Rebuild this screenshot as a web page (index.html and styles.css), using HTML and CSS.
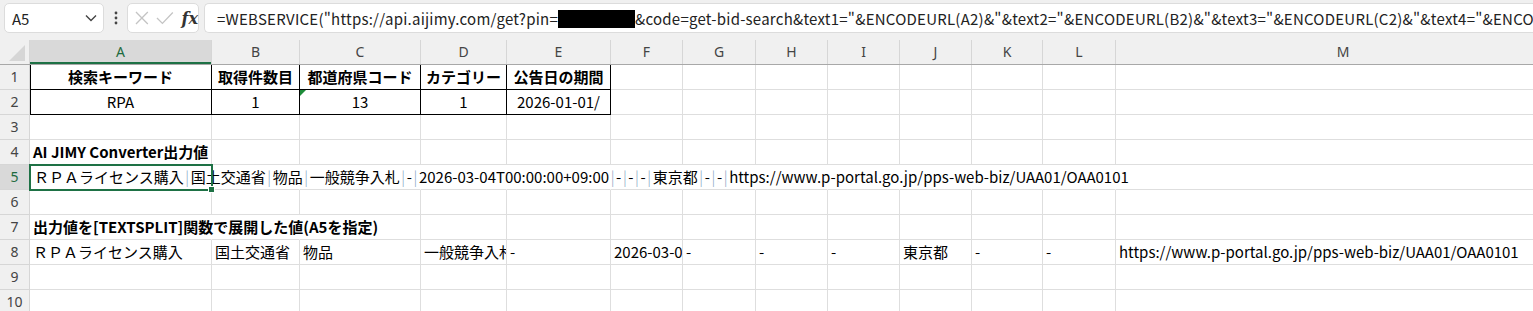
FILE: index.html
```html
<!DOCTYPE html>
<html lang="ja">
<head>
<meta charset="utf-8">
<title>Excel</title>
<link rel="stylesheet" href="styles.css">
</head>
<body>
<div class="toolbar">
  <div class="namebox">
    <span class="nb-text">A5</span>
    <svg class="chev" width="12" height="8" viewBox="0 0 12 8"><path d="M1 1.5 L6 6.5 L11 1.5" fill="none" stroke="#444" stroke-width="1.4"/></svg>
  </div>
  <div class="dots"><svg width="4" height="14" viewBox="0 0 4 14"><circle cx="2" cy="2" r="1.4" fill="#444"/><circle cx="2" cy="7" r="1.4" fill="#444"/><circle cx="2" cy="12" r="1.4" fill="#444"/></svg></div>
  <div class="fxbox">
    <svg width="16" height="16" viewBox="0 0 16 16"><path d="M2 2 L14 14 M14 2 L2 14" stroke="#c4c4c4" stroke-width="1.3" fill="none"/></svg>
    <svg width="18" height="14" viewBox="0 0 18 14"><path d="M1 7 L6.5 12.5 L17 1.5" stroke="#c4c4c4" stroke-width="1.3" fill="none"/></svg>
    <span class="fx">fx</span>
  </div>
  <div class="formula"><span class="ftext">=WEBSERVICE("https://api.aijimy.com/get?pin=<span class="redact"></span>&amp;code=get-bid-search&amp;text1="&amp;ENCODEURL(A2)&amp;"&amp;text2="&amp;ENCODEURL(B2)&amp;"&amp;text3="&amp;ENCODEURL(C2)&amp;"&amp;text4="&amp;ENCODEURL(D2)&amp;"&amp;text5="&amp;ENCODEURL(E2))</span></div>
</div>

<div class="sheet">
  <div class="row hdr">
    <div class="corner"><svg width="16" height="16" viewBox="0 0 16 16"><path d="M16 0 L16 16 L0 16 Z" fill="#d6d6d6"/></svg></div>
    <div class="ch sel">A</div><div class="ch">B</div><div class="ch">C</div><div class="ch">D</div><div class="ch">E</div><div class="ch">F</div><div class="ch">G</div><div class="ch">H</div><div class="ch">I</div><div class="ch">J</div><div class="ch">K</div><div class="ch">L</div><div class="ch">M</div>
  </div>

  <div class="row">
    <div class="rh">1</div>
    <div class="c ctr b tb tl">検索キーワード</div>
    <div class="c ctr b tb">取得件数目</div>
    <div class="c ctr b tb">都道府県コード</div>
    <div class="c ctr b tb">カテゴリー</div>
    <div class="c ctr b tb">公告日の期間</div>
    <div class="c"></div><div class="c"></div><div class="c"></div><div class="c"></div><div class="c"></div><div class="c"></div><div class="c"></div><div class="c"></div>
  </div>

  <div class="row">
    <div class="rh">2</div>
    <div class="c ctr tb tl">RPA</div>
    <div class="c ctr tb">1</div>
    <div class="c ctr tb flag">13</div>
    <div class="c ctr tb">1</div>
    <div class="c ctr tb">2026-01-01/</div>
    <div class="c"></div><div class="c"></div><div class="c"></div><div class="c"></div><div class="c"></div><div class="c"></div><div class="c"></div><div class="c"></div>
  </div>

  <div class="row">
    <div class="rh">3</div>
    <div class="c"></div><div class="c"></div><div class="c"></div><div class="c"></div><div class="c"></div><div class="c"></div><div class="c"></div><div class="c"></div><div class="c"></div><div class="c"></div><div class="c"></div><div class="c"></div><div class="c"></div>
  </div>

  <div class="row">
    <div class="rh">4</div>
    <div class="c b ov">AI JIMY Converter出力値</div>
    <div class="c"></div><div class="c"></div><div class="c"></div><div class="c"></div><div class="c"></div><div class="c"></div><div class="c"></div><div class="c"></div><div class="c"></div><div class="c"></div><div class="c"></div><div class="c"></div>
  </div>

  <div class="row">
    <div class="rh rsel">5</div>
    <div class="c ov nr active">ＲＰＡライセンス購入<span class="sep">|</span>国土交通省<span class="sep">|</span>物品<span class="sep">|</span>一般競争入札<span class="sep">|</span>-<span class="sep">|</span>2026-03-04T00:00:00+09:00<span class="sep">|</span>-<span class="sep">|</span>-<span class="sep">|</span>-<span class="sep">|</span>東京都<span class="sep">|</span>-<span class="sep">|</span>-<span class="sep">|</span>https://www.p-portal.go.jp/pps-web-biz/UAA01/OAA0101</div>
    <div class="c nr"></div><div class="c nr"></div><div class="c nr"></div><div class="c nr"></div><div class="c nr"></div><div class="c nr"></div><div class="c nr"></div><div class="c nr"></div><div class="c nr"></div><div class="c nr"></div><div class="c nr"></div><div class="c"></div>
  </div>

  <div class="row">
    <div class="rh">6</div>
    <div class="c"></div><div class="c"></div><div class="c"></div><div class="c"></div><div class="c"></div><div class="c"></div><div class="c"></div><div class="c"></div><div class="c"></div><div class="c"></div><div class="c"></div><div class="c"></div><div class="c"></div>
  </div>

  <div class="row">
    <div class="rh">7</div>
    <div class="c b ov nr">出力値を[TEXTSPLIT]関数で展開した値(A5を指定)</div>
    <div class="c nr"></div><div class="c"></div><div class="c"></div><div class="c"></div><div class="c"></div><div class="c"></div><div class="c"></div><div class="c"></div><div class="c"></div><div class="c"></div><div class="c"></div><div class="c"></div>
  </div>

  <div class="row">
    <div class="rh">8</div>
    <div class="c">ＲＰＡライセンス購入</div>
    <div class="c">国土交通省</div>
    <div class="c">物品</div>
    <div class="c">一般競争入札</div>
    <div class="c">-</div>
    <div class="c">2026-03-04T00:00:00+09:00</div>
    <div class="c">-</div>
    <div class="c">-</div>
    <div class="c">-</div>
    <div class="c">東京都</div>
    <div class="c">-</div>
    <div class="c">-</div>
    <div class="c">https://www.p-portal.go.jp/pps-web-biz/UAA01/OAA0101</div>
  </div>

  <div class="row">
    <div class="rh">9</div>
    <div class="c"></div><div class="c"></div><div class="c"></div><div class="c"></div><div class="c"></div><div class="c"></div><div class="c"></div><div class="c"></div><div class="c"></div><div class="c"></div><div class="c"></div><div class="c"></div><div class="c"></div>
  </div>

  <div class="row">
    <div class="rh">10</div>
    <div class="c"></div><div class="c"></div><div class="c"></div><div class="c"></div><div class="c"></div><div class="c"></div><div class="c"></div><div class="c"></div><div class="c"></div><div class="c"></div><div class="c"></div><div class="c"></div><div class="c"></div>
  </div>
</div>
</body>
</html>
```

FILE: styles.css
```css
html, body {
  margin: 0;
  padding: 0;
  background: #ffffff;
  overflow: hidden;
  width: 1533px;
  height: 311px;
}
body {
  font-family: "Noto Sans CJK JP", "Noto Sans", sans-serif;
  color: #000;
}

.toolbar {
  display: flex;
  align-items: stretch;
  height: 30px;
  padding: 3px 0 7px 4px;
  background: #f0f0f0;
  box-sizing: content-box;
}
.namebox {
  width: 100px;
  box-sizing: border-box;
  background: #fff;
  border: 1px solid #dcdcdc;
  border-radius: 5px;
  display: flex;
  align-items: center;
  justify-content: space-between;
  padding: 0 6px 0 7px;
  font-size: 15px;
  color: #222;
}
.nb-text { font-family: "Noto Sans CJK JP", "Noto Sans", sans-serif; }
.dots {
  width: 23px;
  display: flex;
  align-items: center;
  justify-content: center;
}
.fxbox {
  width: 72px;
  box-sizing: border-box;
  background: #fff;
  border: 1px solid #dcdcdc;
  border-radius: 5px;
  display: flex;
  align-items: center;
  gap: 6px;
  padding: 0 0 0 6px;
}
.fx {
  font-family: "DejaVu Serif", serif;
  font-style: italic;
  font-weight: bold;
  font-size: 16px;
  color: #333;
  margin-left: 2px;
}
.formula {
  flex: 1;
  margin-left: 5px;
  background: #fff;
  border: 1px solid #dcdcdc;
  border-right: none;
  border-radius: 5px 0 0 5px;
  display: flex;
  align-items: center;
  padding-left: 12px;
  overflow: hidden;
  white-space: nowrap;
}
.ftext {
  font-family: "Noto Sans CJK JP", "Noto Sans", sans-serif;
  font-size: 15px;
  letter-spacing: 0.24px;
  color: #222;
}
.redact {
  display: inline-block;
  width: 77px;
  height: 18px;
  background: #000;
  vertical-align: -3px;
}

.sheet {
  width: 1571px;
}
.row {
  display: grid;
  grid-template-columns: 30px 182px 88px 121px 86px 104px 72px 73px 72px 72px 72px 71px 73px 455px;
  height: 25px;
}
.hdr {
  height: 25px;
  background: #f0f0f0;
  border-bottom: 1px solid #a8a8a8;
  box-sizing: border-box;
}
.corner {
  display: flex;
  align-items: flex-end;
  justify-content: flex-end;
  padding: 0 4px 3px 0;
  border-right: 1px solid #d6d6d6;
}
.ch {
  border-right: 1px solid #d6d6d6;
  text-align: center;
  font-size: 14px;
  line-height: 24px;
  color: #444;
  font-family: "Noto Sans", sans-serif;
}
.ch.sel {
  background: #d9d9d9;
  color: #1d6b40;
  box-shadow: inset 0 -2px 0 #1e7145;
}
.rh {
  background: #f0f0f0;
  border-right: 1px solid #d6d6d6;
  border-bottom: 1px solid #d6d6d6;
  box-sizing: border-box;
  text-align: center;
  font-size: 14px;
  line-height: 24px;
  color: #444;
  font-family: "Noto Sans", sans-serif;
}
.rh.rsel {
  background: #d9d9d9;
  color: #1d6b40;
}
.c {
  box-sizing: border-box;
  border-right: 1px solid #dedede;
  border-bottom: 1px solid #dedede;
  padding: 0 3px;
  font-size: 15px;
  line-height: 24px;
  white-space: nowrap;
  overflow: hidden;
  position: relative;
}
.ctr { text-align: center; }
.b { font-weight: bold; }
.ov { overflow: visible; z-index: 1; }
.nr { border-right-color: transparent; }
.tb { border-right-color: #000; border-bottom-color: #000; }
.tl { box-shadow: inset 1px 0 0 #000; }
.flag::before {
  content: "";
  position: absolute;
  left: 0;
  top: 0;
  border-top: 6px solid #1e8c3a;
  border-right: 6px solid transparent;
}
.sep {
  display: inline-block;
  width: 7px;
  text-align: center;
  color: #8aa6c4;
  font-weight: 300;
}
.active { padding-left: 4px; }
.active::after {
  content: "";
  position: absolute;
  left: -1px;
  top: -1px;
  width: 184px;
  height: 27px;
  box-sizing: border-box;
  border: 2px solid #1e7145;
  pointer-events: none;
}
.active::before {
  content: "";
  position: absolute;
  left: 178px;
  top: 21px;
  width: 7px;
  height: 7px;
  box-sizing: border-box;
  background: #1e7145;
  border: 1px solid #fff;
  z-index: 2;
}
```
